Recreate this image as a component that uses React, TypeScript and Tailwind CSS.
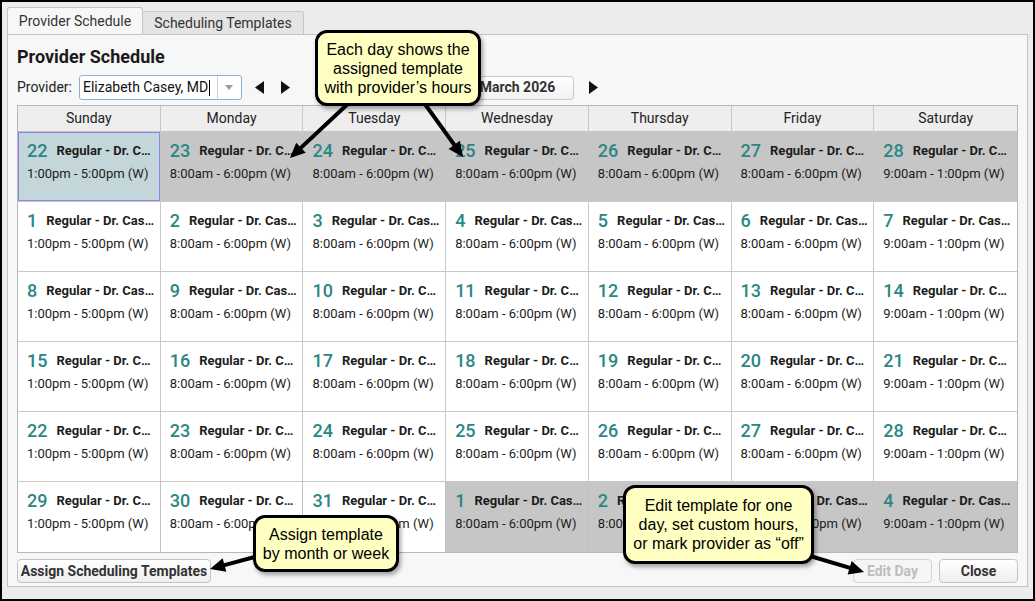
import React from 'react';

// Calendar data: six weeks, first and last rows spill into Feb / April
type Day = { n: number; other?: boolean; selected?: boolean };

const weeks: Day[][] = [
  [
    { n: 22, other: true, selected: true },
    { n: 23, other: true },
    { n: 24, other: true },
    { n: 25, other: true },
    { n: 26, other: true },
    { n: 27, other: true },
    { n: 28, other: true },
  ],
  [1, 2, 3, 4, 5, 6, 7].map((n) => ({ n })),
  [8, 9, 10, 11, 12, 13, 14].map((n) => ({ n })),
  [15, 16, 17, 18, 19, 20, 21].map((n) => ({ n })),
  [22, 23, 24, 25, 26, 27, 28].map((n) => ({ n })),
  [
    { n: 29 },
    { n: 30 },
    { n: 31 },
    { n: 1, other: true },
    { n: 2, other: true },
    { n: 3, other: true },
    { n: 4, other: true },
  ],
];

const dayNames = ['Sunday', 'Monday', 'Tuesday', 'Wednesday', 'Thursday', 'Friday', 'Saturday'];

const hoursFor = (col: number) => {
  if (col === 0) return '1:00pm - 5:00pm (W)';
  if (col === 6) return '9:00am - 1:00pm (W)';
  return '8:00am - 6:00pm (W)';
};

function DayCell({ day, col, lastRow }: { day: Day; col: number; lastRow: boolean }) {
  const bg = day.selected
    ? 'bg-[#c3d6d9] shadow-[inset_0_0_0_1px_#8a86ee]'
    : day.other
      ? 'bg-[#c6c6c6]'
      : 'bg-white';
  return (
    <div
      className={`h-[70px] pl-[9px] pt-[8px] ${bg} ${col < 6 ? 'border-r border-[#c2c2c2]' : ''} ${
        lastRow ? '' : 'border-b border-[#c8c8c8]'
      }`}
    >
      <div className="flex items-center gap-[9px] h-[22px]">
        <span className="text-[18px] font-medium text-[#2a8784] leading-[22px]">{day.n}</span>
        <span className="text-[13px] font-bold text-[#1c1c1c] whitespace-nowrap">
          {day.n < 10 ? 'Regular - Dr. Cas…' : 'Regular - Dr. C…'}
        </span>
      </div>
      <div className="mt-[4px] text-[13px] leading-[16px] text-[#1c1c1c] whitespace-nowrap">{hoursFor(col)}</div>
    </div>
  );
}

function TriLeft() {
  return (
    <svg width="9" height="13" viewBox="0 0 9 13">
      <polygon points="9,0 9,13 0,6.5" fill="#111" />
    </svg>
  );
}

function TriRight() {
  return (
    <svg width="9" height="13" viewBox="0 0 9 13">
      <polygon points="0,0 0,13 9,6.5" fill="#111" />
    </svg>
  );
}

// arrow line with a filled head at (x2, y2)
function Arrow({ x1, y1, x2, y2 }: { x1: number; y1: number; x2: number; y2: number }) {
  const dx = x2 - x1;
  const dy = y2 - y1;
  const len = Math.sqrt(dx * dx + dy * dy);
  const ux = dx / len;
  const uy = dy / len;
  const hl = 15;
  const hw = 7;
  const bx = x2 - ux * hl;
  const by = y2 - uy * hl;
  const pts = `${x2},${y2} ${bx - uy * hw},${by + ux * hw} ${bx + uy * hw},${by - ux * hw}`;
  return (
    <g>
      <line x1={x1} y1={y1} x2={bx + ux * 2} y2={by + uy * 2} stroke="#000" strokeWidth="4" />
      <polygon points={pts} fill="#000" />
    </g>
  );
}

function Callout({ className, lines }: { className: string; lines: string[] }) {
  return (
    <div
      className={`absolute flex flex-col items-center justify-center rounded-[12px] border-[3px] border-black bg-[#ffffc2] shadow-[2px_3px_4px_rgba(0,0,0,0.35)] text-[16px] leading-[19px] text-black font-['Liberation_Sans',Arial,sans-serif] ${className}`}
    >
      {lines.map((l) => (
        <div key={l} className="whitespace-nowrap">
          {l}
        </div>
      ))}
    </div>
  );
}

export default function App() {
  return (
    <div className="relative w-[1035px] h-[601px] overflow-hidden border-2 border-black bg-[#ececec] font-['Roboto',sans-serif] text-[#222]">
      {/* Tabs */}
      <div className="flex items-end ml-[5px] mt-[6px] h-[26px]">
        <div className="relative z-10 h-[27px] w-[136px] rounded-t-[3px] border border-b-0 border-[#c4c4c4] bg-[#f7f7f7] flex items-center justify-center text-[14px] text-[#333]">
          Provider Schedule
        </div>
        <div className="h-[23px] w-[161px] rounded-t-[3px] border border-l-0 border-b-0 border-[#c8c8c8] bg-[#e4e4e4] flex items-center justify-center text-[14px] text-[#333]">
          Scheduling Templates
        </div>
      </div>

      {/* Panel */}
      <div className="ml-[5px] w-[1021px] border border-[#c4c4c4] bg-[#f7f7f7] px-[9px] pt-[11px] pb-[3px]">
        <div className="text-[18px] leading-[22px] font-bold text-[#1a1a1a]">Provider Schedule</div>

        <div className="mt-[7px] grid grid-cols-[1fr_auto_1fr] items-center h-[25px]">
          <div className="flex items-center">
            <span className="text-[14px] text-[#222]">Provider:</span>
            <div className="ml-[7px] flex h-[25px] w-[163px] items-center rounded-[3px] border border-[#8eaee4] bg-white">
              <div className="flex-1 pl-[3px] text-[14px] text-[#111] flex items-center">
                Elizabeth Casey, MD<span className="ml-px inline-block h-[16px] w-px bg-black" />
              </div>
              <div className="flex h-full w-[24px] items-center justify-center border-l border-[#d4d4d4]">
                <svg width="8" height="5" viewBox="0 0 8 5">
                  <polygon points="0,0 8,0 4,5" fill="#9a9a9a" />
                </svg>
              </div>
            </div>
            <div className="ml-[13px] flex items-center gap-[17px]">
              <TriLeft />
              <TriRight />
            </div>
          </div>
          <div className="flex items-center gap-[15px]">
            <TriLeft />
            <div className="flex h-[24px] w-[112px] items-center justify-center rounded-[4px] border border-[#c9c9c9] bg-gradient-to-b from-white to-[#f1f1f1] text-[14px] font-bold text-[#333]">
              March 2026
            </div>
            <TriRight />
          </div>
          <div />
        </div>

        {/* Calendar grid */}
        <div className="mt-[5px] border border-[#b8b8b8] bg-white">
          <div className="grid grid-cols-7 h-[26px] border-b border-[#c4c4c4] bg-[#eeeeee]">
            {dayNames.map((d, i) => (
              <div
                key={d}
                className={`flex items-center justify-center text-[14px] text-[#222] ${i < 6 ? 'border-r border-[#c8c8c8]' : ''}`}
              >
                {d}
              </div>
            ))}
          </div>
          {weeks.map((w, r) => (
            <div key={r} className="grid grid-cols-7">
              {w.map((d, c) => (
                <DayCell key={c} day={d} col={c} lastRow={r === weeks.length - 1} />
              ))}
            </div>
          ))}
        </div>

        {/* Footer buttons */}
        <div className="mt-[6px] flex items-center">
          <button className="h-[24px] w-[194px] rounded-[4px] border border-[#c4c4c4] bg-gradient-to-b from-white to-[#eeeeee] text-[14px] font-bold text-[#333]">
            Assign Scheduling Templates
          </button>
          <div className="flex-1" />
          <button className="h-[24px] w-[79px] rounded-[4px] border border-[#d4d4d4] bg-[#f5f5f5] text-[14px] font-bold text-[#bdbdbd]">
            Edit Day
          </button>
          <button className="ml-[7px] h-[24px] w-[79px] rounded-[4px] border border-[#c4c4c4] bg-gradient-to-b from-white to-[#eeeeee] text-[14px] font-bold text-[#333]">
            Close
          </button>
        </div>
      </div>

      {/* Annotation arrows and callouts */}
      <svg className="pointer-events-none absolute left-[-2px] top-[-2px]" width="1035" height="601">
        <Arrow x1={352} y1={100} x2={290} y2={158} />
        <Arrow x1={422} y1={100} x2={463} y2={157} />
        <Arrow x1={262} y1={555} x2={210} y2={569} />
        <Arrow x1={800} y1={553} x2={864} y2={572} />
      </svg>
      <Callout
        className="left-[313px] top-[28px] w-[166px] h-[76px]"
        lines={['Each day shows the', 'assigned template', "with provider’s hours"]}
      />
      <Callout className="left-[251px] top-[513px] w-[146px] h-[57px]" lines={['Assign template', 'by month or week']} />
      <Callout
        className="left-[621px] top-[483px] w-[191px] h-[79px]"
        lines={['Edit template for one', 'day, set custom hours,', 'or mark provider as “off”']}
      />
    </div>
  );
}
